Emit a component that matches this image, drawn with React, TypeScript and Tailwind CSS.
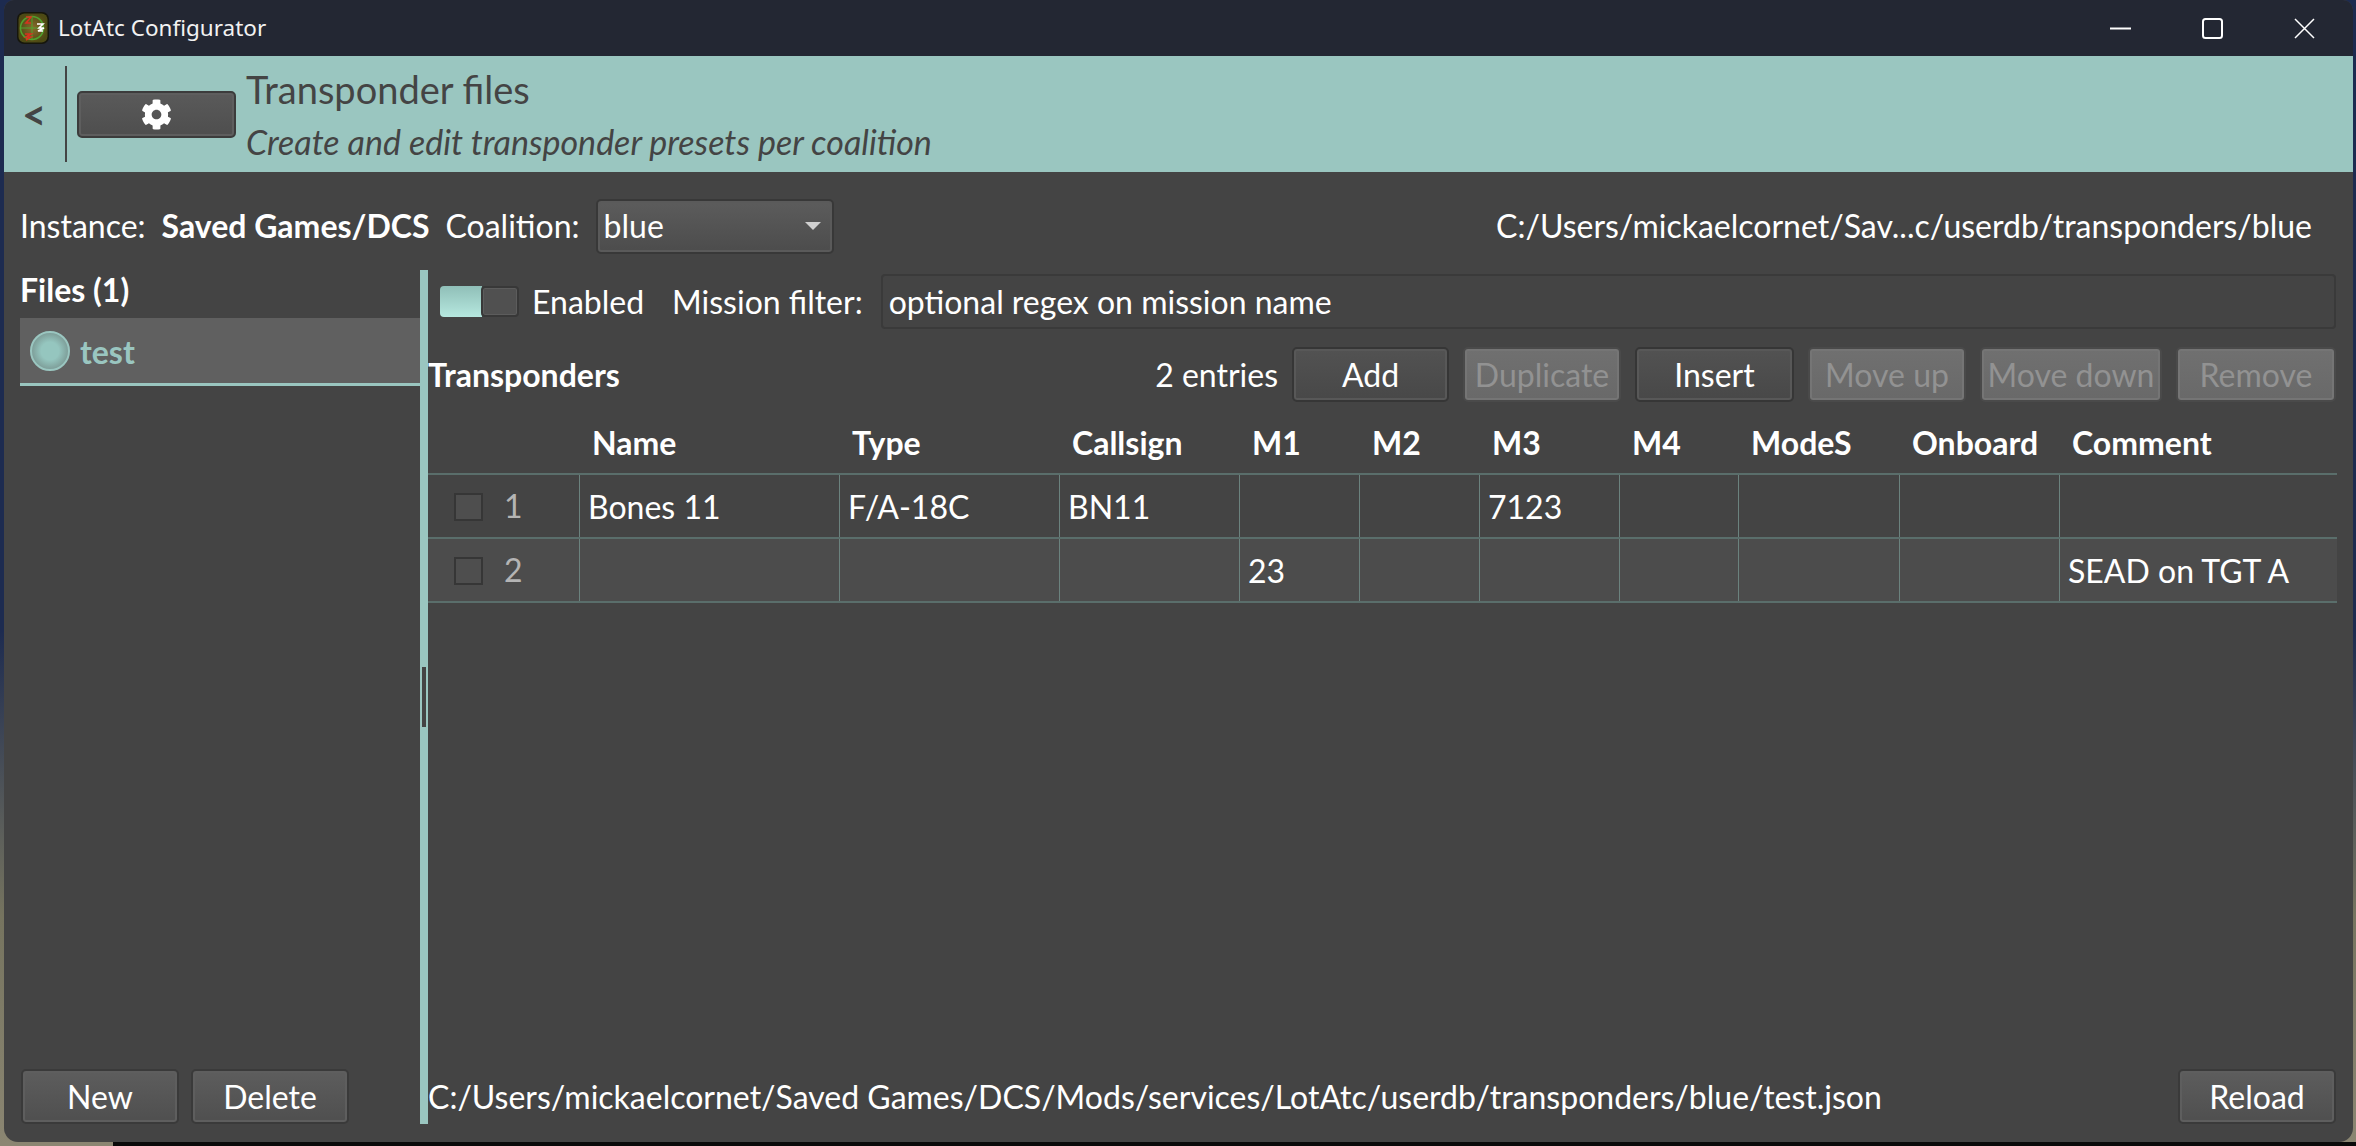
import React from 'react';
import { FaCog } from 'react-icons/fa';

type Column = { label: string; width: string };

const columns: Column[] = [
  { label: 'Name', width: 'w-[260px]' },
  { label: 'Type', width: 'w-[220px]' },
  { label: 'Callsign', width: 'w-[180px]' },
  { label: 'M1', width: 'w-[120px]' },
  { label: 'M2', width: 'w-[120px]' },
  { label: 'M3', width: 'w-[140px]' },
  { label: 'M4', width: 'w-[119px]' },
  { label: 'ModeS', width: 'w-[161px]' },
  { label: 'Onboard', width: 'w-[160px]' },
  { label: 'Comment', width: 'flex-1' },
];

const rows: string[][] = [
  ['Bones 11', 'F/A-18C', 'BN11', '', '', '7123', '', '', '', ''],
  ['', '', '', '23', '', '', '', '', '', 'SEAD on TGT A'],
];

const Button: React.FC<{ label: string; className: string; disabled?: boolean; dark?: boolean }> = ({
  label,
  className,
  disabled,
  dark,
}) => {
  let look = 'border-[#3a3a3a] from-[#5d5d5d] to-[#4f4f4f] shadow-[inset_0_0_0_2px_#5e5e5e] text-white';
  if (dark) look = 'border-[#363636] from-[#525252] to-[#484848] shadow-[inset_0_0_0_2px_#585858] text-white';
  if (disabled) look = 'border-[#4a4a4a] from-[#707070] to-[#696969] shadow-[inset_0_0_0_2px_#757575] text-[#929292]';
  return (
    <button className={`h-[55px] shrink-0 rounded-[5px] border-2 bg-gradient-to-b text-[32px] leading-none ${look} ${className}`}>
      {label}
    </button>
  );
};

const AppIcon = () => (
  <svg viewBox="0 0 32 32" className="h-[32px] w-[32px] shrink-0">
    <defs>
      <radialGradient id="radar">
        <stop offset="0%" stopColor="#8a6a2c" />
        <stop offset="100%" stopColor="#4d4a14" />
      </radialGradient>
    </defs>
    <rect width="32" height="32" rx="7" fill="#16160c" />
    <rect x="1.5" y="1.5" width="29" height="29" rx="6" fill="url(#radar)" />
    <circle cx="15" cy="16" r="11.5" fill="none" stroke="#4fa32e" strokeWidth="1.5" />
    <path d="M15 4v24M3 16h24" stroke="#4fa32e" strokeWidth="1" />
    <path d="M9 5h5l-5 6h5M8 22h6l-5 3h5l-5 3" fill="none" stroke="#d8321f" strokeWidth="1.6" />
    <path d="M20 12h6l-4 4h5l-6 3h5" fill="none" stroke="#ffffff" strokeWidth="1.6" />
  </svg>
);

const App: React.FC = () => {
  return (
    <div className="flex h-screen w-full flex-col bg-[linear-gradient(180deg,#1d2b50_0%,#1d2b50_55%,#76745f_80%,#8b8672_100%)] font-['Lato',sans-serif] text-[32px] text-white">
      <div className="ml-[4px] mr-[3px] flex h-[1142px] flex-col overflow-hidden rounded-t-[10px] rounded-b-[14px] bg-[#444444]">
        {/* title bar */}
        <div className="flex h-[56px] shrink-0 items-center bg-[#232733] pl-[13px] pr-[38px]">
          <AppIcon />
          <span className="ml-[9px] font-['Noto_Sans',sans-serif] text-[22.5px] text-[#f2f2f2]">LotAtc Configurator</span>
          <div className="ml-auto flex items-center gap-[71px]">
            <svg viewBox="0 0 21 21" className="h-[21px] w-[21px]">
              <path d="M0 10.5h21" stroke="#fff" strokeWidth="2" />
            </svg>
            <svg viewBox="0 0 21 21" className="h-[21px] w-[21px]">
              <rect x="1" y="1" width="19" height="19" rx="2.5" fill="none" stroke="#fff" strokeWidth="2" />
            </svg>
            <svg viewBox="0 0 21 21" className="h-[21px] w-[21px]">
              <path d="M1 1l19 19M20 1L1 20" stroke="#fff" strokeWidth="1.5" />
            </svg>
          </div>
        </div>

        {/* page header */}
        <div className="flex h-[116px] shrink-0 items-center bg-[#9ac6c0] text-[#444444]">
          <span className="ml-[18px] w-[43px] text-[42px] font-bold leading-none">&lt;</span>
          <div className="h-[96px] w-[2px] bg-[#444444]" />
          <button className="ml-[10px] flex h-[47px] w-[159px] items-center justify-center rounded-[5px] border-2 border-[#3c3c3c] bg-gradient-to-b from-[#5a5a5a] to-[#4e4e4e] shadow-[inset_0_0_0_2px_#5e5e5e]">
            <FaCog className="h-[31px] w-[31px] text-white" />
          </button>
          <div className="ml-[10px] flex h-full flex-col">
            <div className="mt-[10px] text-[38px] leading-[46px]">Transponder files</div>
            <div className="mt-[10px] text-[34px] italic leading-[40px]">Create and edit transponder presets per coalition</div>
          </div>
        </div>

        {/* instance row */}
        <div className="flex h-[98px] shrink-0 items-center pl-[16px] pr-[41px] pt-[10px]">
          <span>Instance:</span>
          <span className="ml-[16px] font-bold">Saved Games/DCS</span>
          <span className="ml-[16px]">Coalition:</span>
          <div className="ml-[16px] flex h-[55px] w-[238px] items-center justify-between rounded-[5px] border-2 border-[#383838] bg-gradient-to-b from-[#5c5c5c] to-[#4c4c4c] pl-[6px] pr-[11px] shadow-[inset_0_0_0_2px_#5a5a5a]">
            <span>blue</span>
            <svg viewBox="0 0 16 8" className="h-[8px] w-[16px]">
              <path d="M0 0h16L8 8z" fill="#d0d0d0" />
            </svg>
          </div>
          <span className="ml-auto">C:/Users/mickaelcornet/Sav...c/userdb/transponders/blue</span>
        </div>

        <div className="flex h-[854px] shrink-0">
          {/* files panel */}
          <div className="flex w-[416px] shrink-0 flex-col pl-[16px]">
            <div className="flex h-[48px] items-center pb-[8px] font-bold">Files (1)</div>
            <div className="flex h-[68px] items-center border-b-[3px] border-[#9ac6c0] bg-[#606060] pl-[10px]">
              <div className="h-[40px] w-[40px] rounded-full border-2 border-[#9ac6c0] bg-[radial-gradient(circle,#95c6bf_35%,#6c7f7c_100%)]" />
              <span className="ml-[10px] pt-[2px] font-bold text-[#9ac6c0]">test</span>
            </div>
            <div className="mt-auto flex gap-[12px] pl-px">
              <Button label="New" className="w-[158px]" />
              <Button label="Delete" className="w-[158px]" />
            </div>
          </div>

          {/* splitter */}
          <div className="flex w-[8px] shrink-0 items-center justify-center bg-[#9ac6c0]">
            <div className="h-[60px] w-[4px] bg-[#444444]" />
          </div>

          {/* editor */}
          <div className="flex min-w-0 flex-1 flex-col pr-[17px]">
            <div className="mt-[4px] flex h-[55px] items-center">
              <div className="ml-[12px] flex h-[31px] w-[79px]">
                <div className="h-full w-[42px] rounded-l-[4px] bg-gradient-to-b from-[#90bfb8] to-[#b6e8df]" />
                <div className="h-full w-[38px] -ml-px rounded-[4px] border-2 border-[#383838] bg-[#505050] shadow-[inset_0_0_0_1px_#5c5c5c]" />
              </div>
              <span className="ml-[13px]">Enabled</span>
              <span className="ml-[28px]">Mission filter:</span>
              <div className="ml-[18px] flex h-[55px] flex-1 items-center rounded-[4px] border-2 border-[#3a3a3a] bg-[#444444] pl-[6px]">
                optional regex on mission name
              </div>
            </div>

            <div className="mt-[18px] flex h-[55px] items-center">
              <span className="font-bold">Transponders</span>
              <span className="ml-auto mr-[14px]">2 entries</span>
              <div className="flex gap-[14px]">
                <Button label="Add" className="w-[157px]" dark />
                <Button label="Duplicate" className="w-[158px]" disabled />
                <Button label="Insert" className="w-[159px]" dark />
                <Button label="Move up" className="w-[158px]" disabled />
                <Button label="Move down" className="w-[182px]" disabled />
                <Button label="Remove" className="w-[160px]" disabled />
              </div>
            </div>

            {/* table */}
            <div className="mr-[-1px] flex h-[73px] border-b-2 border-[#5a6e6b] pt-[10px] font-bold">
              <div className="w-[151px] shrink-0" />
              {columns.map(col => (
                <div key={col.label} className={`flex items-center pl-[13px] ${col.width}`}>
                  {col.label}
                </div>
              ))}
            </div>
            {rows.map((row, i) => (
              <div key={i} className={`mr-[-1px] flex h-[64px] border-b-2 border-[#5a6e6b] ${i === 1 ? 'bg-[#4c4c4c]' : ''}`}>
                <div className="flex w-[151px] shrink-0 items-center pl-[26px]">
                  <div className="mt-[2px] h-[28px] w-[29px] border-2 border-[#363636] bg-[#4e4e4e]" />
                  <span className="ml-[21px] text-[#b4b4b4]">{i + 1}</span>
                </div>
                {columns.map((col, j) => (
                  <div key={col.label} className={`flex items-center border-l border-[#6b827e] pl-[8px] pt-px ${col.width}`}>
                    {row[j]}
                  </div>
                ))}
              </div>
            ))}

            <div className="mt-auto flex items-center justify-between">
              <span>C:/Users/mickaelcornet/Saved Games/DCS/Mods/services/LotAtc/userdb/transponders/blue/test.json</span>
              <Button label="Reload" className="w-[158px]" />
            </div>
          </div>
        </div>
      </div>

      {/* what shows of the desktop under the window */}
      <div className="flex h-[4px] shrink-0">
        <div className="w-[113px] bg-[#8b8672]" />
        <div className="flex-1 bg-[#0a0a0a]" />
      </div>
    </div>
  );
};

export default App;
